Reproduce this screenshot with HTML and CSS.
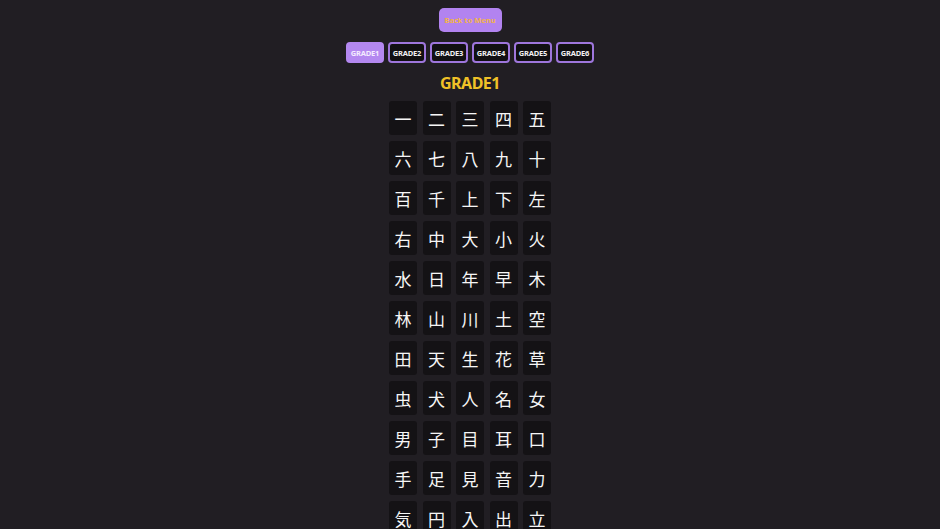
FILE: index.html
```html
<!DOCTYPE html>
<html lang="ja">
<head>
<meta charset="utf-8">
<title>Kanji Grade 1</title>
<link rel="stylesheet" href="styles.css">
</head>
<body>
<main class="page">
  <button class="back-btn">Back to Menu</button>
  <nav class="grade-tabs">
    <button class="grade-btn active">GRADE1</button>
    <button class="grade-btn">GRADE2</button>
    <button class="grade-btn">GRADE3</button>
    <button class="grade-btn">GRADE4</button>
    <button class="grade-btn">GRADE5</button>
    <button class="grade-btn">GRADE6</button>
  </nav>
  <h1 class="grade-title">GRADE1</h1>
  <section class="kanji-grid">
    <div class="kanji">一</div><div class="kanji">二</div><div class="kanji">三</div><div class="kanji">四</div><div class="kanji">五</div>
    <div class="kanji">六</div><div class="kanji">七</div><div class="kanji">八</div><div class="kanji">九</div><div class="kanji">十</div>
    <div class="kanji">百</div><div class="kanji">千</div><div class="kanji">上</div><div class="kanji">下</div><div class="kanji">左</div>
    <div class="kanji">右</div><div class="kanji">中</div><div class="kanji">大</div><div class="kanji">小</div><div class="kanji">火</div>
    <div class="kanji">水</div><div class="kanji">日</div><div class="kanji">年</div><div class="kanji">早</div><div class="kanji">木</div>
    <div class="kanji">林</div><div class="kanji">山</div><div class="kanji">川</div><div class="kanji">土</div><div class="kanji">空</div>
    <div class="kanji">田</div><div class="kanji">天</div><div class="kanji">生</div><div class="kanji">花</div><div class="kanji">草</div>
    <div class="kanji">虫</div><div class="kanji">犬</div><div class="kanji">人</div><div class="kanji">名</div><div class="kanji">女</div>
    <div class="kanji">男</div><div class="kanji">子</div><div class="kanji">目</div><div class="kanji">耳</div><div class="kanji">口</div>
    <div class="kanji">手</div><div class="kanji">足</div><div class="kanji">見</div><div class="kanji">音</div><div class="kanji">力</div>
    <div class="kanji">気</div><div class="kanji">円</div><div class="kanji">入</div><div class="kanji">出</div><div class="kanji">立</div>
  </section>
</main>
</body>
</html>
```

FILE: styles.css
```css
html {
  scrollbar-width: none;
  background: #211e23;
}
html::-webkit-scrollbar { display: none; }

body {
  margin: 0;
  background: #211e23;
  font-family: "Noto Sans", "Liberation Sans", sans-serif;
}

.page {
  display: flex;
  flex-direction: column;
  align-items: center;
  padding-top: 8px;
}

.back-btn {
  width: 63px;
  height: 24px;
  border: none;
  border-radius: 5px;
  background: #b283f0;
  color: #f3b447;
  font-family: inherit;
  font-size: 7.5px;
  font-weight: 700;
  padding: 0;
  cursor: pointer;
}

.grade-tabs {
  display: flex;
  gap: 4px;
  margin-top: 10px;
}

.grade-btn {
  width: 38px;
  height: 21px;
  padding: 0;
  border: 2px solid #9e76dc;
  border-radius: 4px;
  background: #111012;
  color: #f2f2f2;
  font-family: inherit;
  font-size: 7.5px;
  font-weight: 700;
  letter-spacing: -0.2px;
  cursor: pointer;
}

.grade-btn.active {
  background: #b488f0;
  border-color: #b488f0;
  color: #f4ecff;
}

.grade-title {
  margin: 9px 0 0;
  height: 29px;
  color: #f0c127;
  font-size: 16px;
  font-weight: 700;
  letter-spacing: -0.5px;
  line-height: 22px;
}

.kanji-grid {
  display: grid;
  grid-template-columns: repeat(5, 28px);
  grid-auto-rows: 34px;
  column-gap: 5.5px;
  row-gap: 6px;
}

.kanji {
  display: flex;
  align-items: center;
  justify-content: center;
  background: #141215;
  border-radius: 3px;
  color: #f6f6f6;
  font-family: "Noto Sans CJK JP", "Noto Sans CJK SC", sans-serif;
  font-size: 17px;
  font-weight: 400;
}
```
